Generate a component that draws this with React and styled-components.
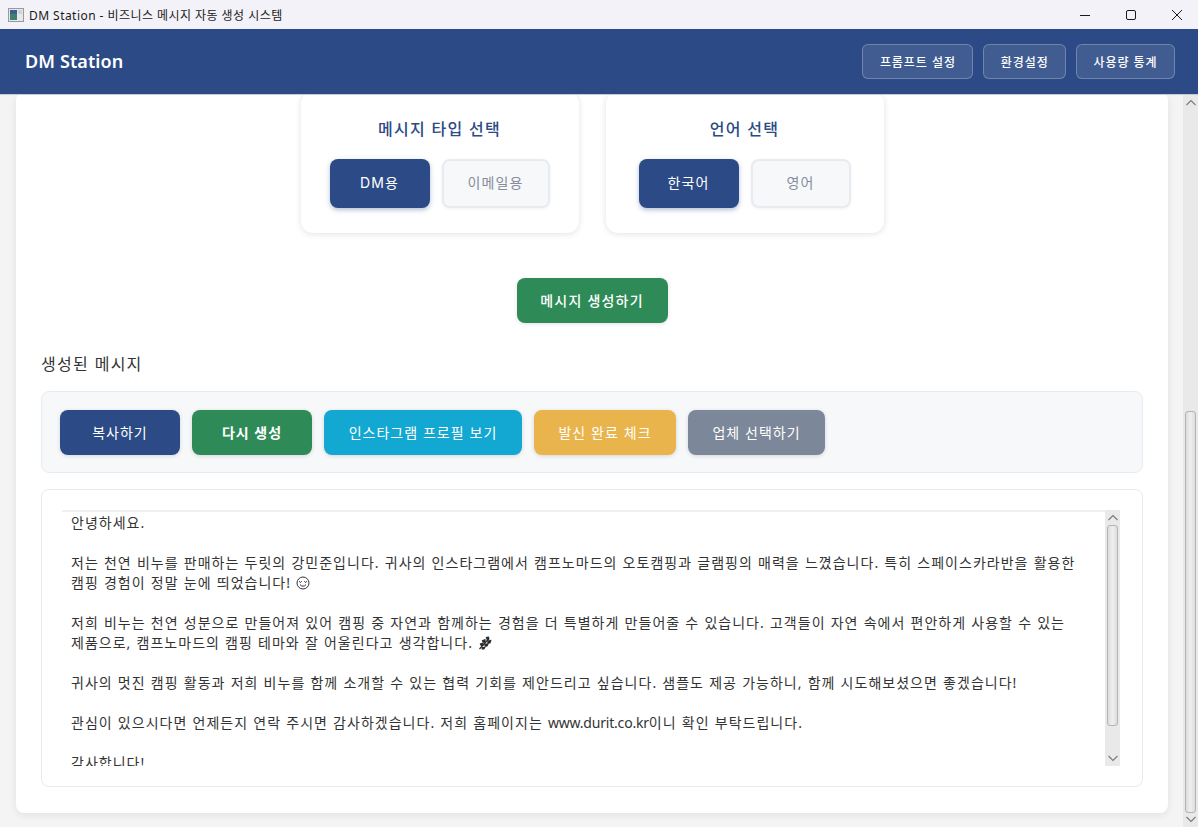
import React from "react";
import styled, { createGlobalStyle } from "styled-components";

const TEXT_FONT = `"Noto Sans", "Noto Sans CJK KR", sans-serif`;
const UI_FONT = `Inter, "Noto Sans CJK KR", sans-serif`;

const GlobalStyle = createGlobalStyle`
  html, body {
    margin: 0;
    height: 100%;
    overflow: hidden;
  }
  #root {
    height: 100%;
  }
  * {
    box-sizing: border-box;
  }
`;

const HEADER_BUTTONS = ["프롬프트 설정", "환경설정", "사용량 통계"];

const ACTIONS = [
  { label: "복사하기", color: "#2c4a85", width: 120 },
  { label: "다시 생성", color: "#2e8b57", width: 120, bold: true },
  { label: "인스타그램 프로필 보기", color: "#12a8d1", width: 198 },
  { label: "발신 완료 체크", color: "#e9b44c", width: 142 },
  { label: "업체 선택하기", color: "#7c8799", width: 137 },
];

const Latin = styled.span`
  letter-spacing: -0.2px;
`;

const EmojiIcon = styled.svg`
  display: inline-block;
  width: 14px;
  height: 14px;
  vertical-align: -2px;
`;

const FaceIcon = () => (
  <EmojiIcon viewBox="0 0 14 14">
    <circle cx="7" cy="7" r="6" fill="none" stroke="#333" strokeWidth="1" />
    <path d="M3.2 5.2 L4.4 6.6 L5.7 5.2 M8.3 5.2 L9.6 6.6 L10.8 5.2" fill="none" stroke="#333" strokeWidth="1" />
    <path d="M4 8.6 Q7 11.8 10 8.6" fill="none" stroke="#333" strokeWidth="1" />
  </EmojiIcon>
);

const HerbIcon = () => (
  <EmojiIcon viewBox="0 0 14 14">
    <path d="M1.5 13 L11 2.5" fill="none" stroke="#2b2b2b" strokeWidth="1.2" />
    <path
      d="M7.6 1 L11 0.4 L11.4 3.6 L8.8 4 Z M3.6 4.6 L7.6 2.8 L7.6 6.6 L5 7 Z M9.2 4.6 L13.6 3.8 L12.4 7.6 L9.4 7.4 Z M1.6 7.4 L5.4 6.4 L5.4 10 L2.8 10 Z M6.2 7.6 L11 7.2 L9.2 10.8 L6.6 10.6 Z M3.4 11.2 L8 10.6 L6.2 13.4 L3.8 13.4 Z"
      fill="#2b2b2b"
    />
  </EmojiIcon>
);

const LINES = [
  "안녕하세요.",
  "",
  "저는 천연 비누를 판매하는 두릿의 강민준입니다. 귀사의 인스타그램에서 캠프노마드의 오토캠핑과 글램핑의 매력을 느꼈습니다. 특히 스페이스카라반을 활용한",
  <>캠핑 경험이 정말 눈에 띄었습니다! <FaceIcon /></>,
  "",
  "저희 비누는 천연 성분으로 만들어져 있어 캠핑 중 자연과 함께하는 경험을 더 특별하게 만들어줄 수 있습니다. 고객들이 자연 속에서 편안하게 사용할 수 있는",
  <>제품으로, 캠프노마드의 캠핑 테마와 잘 어울린다고 생각합니다. <HerbIcon /></>,
  "",
  "귀사의 멋진 캠핑 활동과 저희 비누를 함께 소개할 수 있는 협력 기회를 제안드리고 싶습니다. 샘플도 제공 가능하니, 함께 시도해보셨으면 좋겠습니다!",
  "",
  <>관심이 있으시다면 언제든지 연락 주시면 감사하겠습니다. 저희 홈페이지는 <Latin>www.durit.co.kr</Latin>이니 확인 부탁드립니다.</>,
  "",
  "감사합니다!",
];

const Chevron = ({ down }) => (
  <ArrowIcon viewBox="0 0 10 6" $down={down}>
    <path d="M0.5 5.5 L5 1 L9.5 5.5" fill="none" stroke="#7a7a7a" strokeWidth="1.1" />
  </ArrowIcon>
);

const Scrollbar = ({ thumbTop, thumbHeight }) => (
  <Track>
    <Chevron />
    <ThumbArea>
      <Thumb style={{ top: thumbTop, height: thumbHeight }} />
    </ThumbArea>
    <Chevron down />
  </Track>
);

const App = () => (
  <Window>
    <GlobalStyle />
    <TitleBar>
      <TitleLeft>
        <AppIcon viewBox="0 0 16 16">
          <rect x="0.5" y="1.5" width="15" height="13" fill="#e8e8e8" stroke="#9a9a9a" />
          <rect x="2" y="3" width="7" height="10" fill="#3f7f78" />
          <rect x="2" y="3" width="7" height="4" fill="#3d5f8c" />
          <rect x="10" y="3" width="4" height="4" fill="#c9d6e2" />
        </AppIcon>
        DM Station - 비즈니스 메시지 자동 생성 시스템
      </TitleLeft>
      <WindowButtons>
        <svg width="12" height="12" viewBox="0 0 12 12">
          <path d="M1 6.5 H11" stroke="#1a1a1a" strokeWidth="1" />
        </svg>
        <svg width="12" height="12" viewBox="0 0 12 12">
          <rect x="1.5" y="1.5" width="9" height="9" rx="1.5" fill="none" stroke="#1a1a1a" />
        </svg>
        <svg width="12" height="12" viewBox="0 0 12 12">
          <path d="M1 1 L11 11 M11 1 L1 11" stroke="#1a1a1a" strokeWidth="1" />
        </svg>
      </WindowButtons>
    </TitleBar>
    <Header>
      <Brand>DM Station</Brand>
      <HeaderNav>
        {HEADER_BUTTONS.map((label) => (
          <HeaderButton key={label}>{label}</HeaderButton>
        ))}
      </HeaderNav>
    </Header>
    <Body>
      <Scroller>
        <Card>
          <Selectors>
            <SelectorCard>
              <SelectorTitle>메시지 타입 선택</SelectorTitle>
              <OptionRow>
                <OptionButton $active $width={100}>DM용</OptionButton>
                <OptionButton $width={108}>이메일용</OptionButton>
              </OptionRow>
            </SelectorCard>
            <SelectorCard>
              <SelectorTitle>언어 선택</SelectorTitle>
              <OptionRow>
                <OptionButton $active $width={100}>한국어</OptionButton>
                <OptionButton $width={100}>영어</OptionButton>
              </OptionRow>
            </SelectorCard>
          </Selectors>
          <GenerateRow>
            <GenerateButton>메시지 생성하기</GenerateButton>
          </GenerateRow>
          <SectionTitle>생성된 메시지</SectionTitle>
          <ActionPanel>
            {ACTIONS.map((action) => (
              <ActionButton
                key={action.label}
                $color={action.color}
                $width={action.width}
                $bold={action.bold}
              >
                {action.label}
              </ActionButton>
            ))}
          </ActionPanel>
          <MessageCard>
            <MessageBox>
              <MessageText>
                {LINES.map((line, i) => (
                  <MessageLine key={i}>{line}</MessageLine>
                ))}
              </MessageText>
              <Scrollbar thumbTop={0} thumbHeight={201} />
            </MessageBox>
          </MessageCard>
        </Card>
      </Scroller>
      <PageScrollbar>
        <Scrollbar thumbTop={301} thumbHeight={402} />
      </PageScrollbar>
    </Body>
  </Window>
);

const Window = styled.div`
  display: flex;
  flex-direction: column;
  height: 100vh;
  background: #f4f4f4;
  font-family: ${UI_FONT};
`;

const TitleBar = styled.div`
  flex: 0 0 29px;
  display: flex;
  align-items: center;
  justify-content: space-between;
  background: #f3f2f9;
  padding: 0 15px 0 8px;
`;

const TitleLeft = styled.div`
  display: flex;
  align-items: center;
  gap: 5px;
  font-size: 12px;
  letter-spacing: 0.45px;
  color: #1a1a1a;
  font-family: ${TEXT_FONT};
`;

const AppIcon = styled.svg`
  width: 16px;
  height: 16px;
`;

const WindowButtons = styled.div`
  display: flex;
  gap: 34px;
`;

const Header = styled.header`
  flex: 0 0 66px;
  display: flex;
  align-items: center;
  justify-content: space-between;
  padding: 0 23px 0 25px;
  background: #2c4a85;
  border-bottom: 1px solid #c5cad3;
`;

const Brand = styled.h1`
  margin: -2px 0 0;
  font-size: 18px;
  font-weight: 600;
  color: #fff;
  letter-spacing: 0.1px;
  font-family: ${TEXT_FONT};
`;

const HeaderNav = styled.nav`
  display: flex;
  gap: 10px;
`;

const HeaderButton = styled.button`
  height: 35px;
  padding: 0 16.4px;
  border: 1px solid rgba(255, 255, 255, 0.25);
  border-radius: 6px;
  background: rgba(255, 255, 255, 0.1);
  color: #fff;
  font-family: ${UI_FONT};
  font-size: 12px;
  font-weight: 500;
  letter-spacing: 0.95px;
`;

const Body = styled.div`
  flex: 1;
  min-height: 0;
  display: flex;
`;

const Scroller = styled.main`
  flex: 1;
  min-width: 0;
  display: flex;
  flex-direction: column;
  justify-content: flex-end;
  overflow: hidden;
  padding: 0 15px 14px 16px;
`;

const Card = styled.div`
  flex: none;
  background: #fff;
  border-radius: 8px;
  box-shadow: 0 2px 8px rgba(0, 0, 0, 0.08);
  padding: 0 25px 26px;
`;

const Selectors = styled.div`
  display: flex;
  justify-content: center;
  gap: 27px;
`;

const SelectorCard = styled.section`
  width: 278px;
  height: 141px;
  padding: 25px 0 0;
  background: #fff;
  border-radius: 12px;
  box-shadow: 0 1px 6px rgba(0, 0, 0, 0.12);
`;

const SelectorTitle = styled.h3`
  margin: 0 0 18px;
  text-align: center;
  font-size: 16px;
  line-height: 24px;
  font-weight: 500;
  letter-spacing: 1.25px;
  color: #2c4a85;
`;

const OptionRow = styled.div`
  display: flex;
  justify-content: center;
  gap: 12px;
`;

const OptionButton = styled.button`
  width: ${({ $width }) => $width}px;
  height: 49px;
  padding: 0 0 3px;
  border-radius: 8px;
  font-family: ${UI_FONT};
  font-size: 14px;
  letter-spacing: 1.1px;
  border: ${({ $active }) => ($active ? "none" : "2px solid #e8ebf0")};
  background: ${({ $active }) => ($active ? "#2c4a85" : "#f7f8fa")};
  color: ${({ $active }) => ($active ? "#fff" : "#858c9b")};
  box-shadow: ${({ $active }) =>
    $active ? "0 2px 5px rgba(44, 74, 133, 0.35)" : "0 1px 3px rgba(0, 0, 0, 0.06)"};
`;

const GenerateRow = styled.div`
  display: flex;
  justify-content: center;
  margin-top: 45px;
`;

const GenerateButton = styled.button`
  width: 151px;
  height: 45px;
  padding: 0 0 2px;
  border: none;
  border-radius: 8px;
  background: #2e8b57;
  color: #fff;
  font-family: ${UI_FONT};
  font-size: 14px;
  font-weight: 500;
  letter-spacing: 1.2px;
  box-shadow: 0 1px 4px rgba(0, 0, 0, 0.12);
`;

const SectionTitle = styled.h2`
  margin: 29px 0 15px;
  font-size: 16px;
  line-height: 24px;
  font-weight: 400;
  letter-spacing: 1.25px;
  color: #333;
`;

const ActionPanel = styled.div`
  display: flex;
  align-items: flex-start;
  gap: 12px;
  height: 82px;
  padding: 18px;
  background: #f7f8fa;
  border: 1px solid #e8ebf0;
  border-radius: 8px;
`;

const ActionButton = styled.button`
  flex: none;
  width: ${({ $width }) => $width}px;
  height: 45px;
  padding: 0 0 2px;
  border: none;
  border-radius: 8px;
  background: ${({ $color }) => $color};
  color: #fff;
  font-family: ${UI_FONT};
  font-size: 14px;
  font-weight: ${({ $bold }) => ($bold ? 600 : 400)};
  letter-spacing: 1px;
  box-shadow: 0 1px 4px rgba(0, 0, 0, 0.14);
`;

const MessageCard = styled.div`
  margin-top: 16px;
  height: 298px;
  padding: 20px 22px 20px 20px;
  background: #fff;
  border: 1px solid #e8ebf0;
  border-radius: 8px;
`;

const MessageBox = styled.div`
  display: flex;
  height: 100%;
`;

const MessageText = styled.div`
  flex: 1;
  min-width: 0;
  height: 100%;
  overflow: hidden;
  padding: 1px 9px 0;
  border-top: 2px solid #f0f0f0;
  font-family: ${TEXT_FONT};
  font-size: 14px;
  line-height: 20px;
  letter-spacing: 1.02px;
  word-spacing: 0.5px;
  color: #333;
`;

const MessageLine = styled.div`
  height: 20px;
  white-space: pre;
`;

const Track = styled.div`
  flex: 0 0 15px;
  width: 15px;
  height: 100%;
  display: flex;
  flex-direction: column;
  align-items: center;
  background: #e9e9e9;
`;

const ArrowIcon = styled.svg`
  flex: 0 0 15px;
  width: 10px;
  height: 15px;
  transform: ${({ $down }) => ($down ? "scaleY(-1)" : "none")};
`;

const ThumbArea = styled.div`
  position: relative;
  flex: 1;
  width: 100%;
`;

const Thumb = styled.div`
  position: absolute;
  left: 2px;
  right: 2px;
  background: linear-gradient(90deg, #dcdcdc, #efefef 50%, #dcdcdc);
  border: 1px solid #b4b4b4;
  border-radius: 3px;
`;

const PageScrollbar = styled.div`
  flex: 0 0 14px;
  height: 100%;
  display: flex;
  justify-content: center;
`;

export default App;
